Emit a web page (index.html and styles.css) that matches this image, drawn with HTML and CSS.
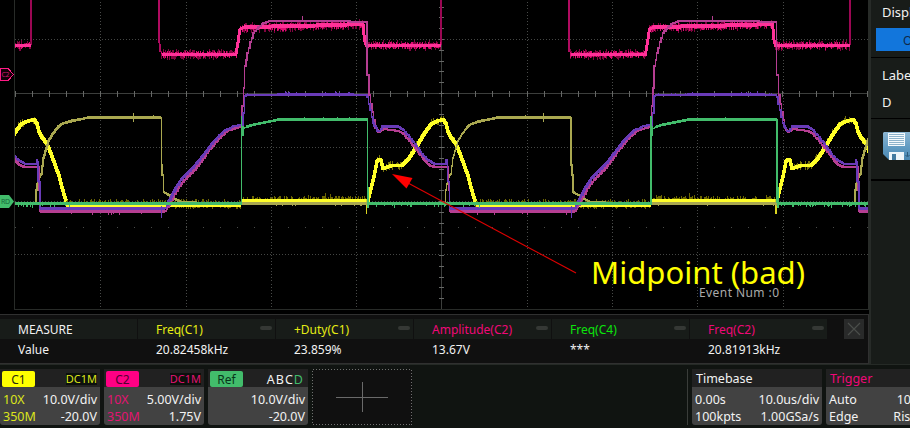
FILE: index.html
```html
<!DOCTYPE html>
<html lang="en">
<head>
<meta charset="utf-8">
<title>Oscilloscope</title>
<link rel="stylesheet" href="styles.css">
</head>
<body>
<div class="scope">
  <div class="upper">
    <main class="main">
      <svg class="plot" width="869" height="314" viewBox="0 0 869 314">
        <defs><clipPath id="area"><rect x="15" y="0" width="853" height="309"/></clipPath></defs>
        <g id="grid" shape-rendering="crispEdges"></g>
        <path d="M14.5 0V309.5H868.5V0" fill="none" stroke="#282b28" shape-rendering="crispEdges"/>
        <g id="waves" clip-path="url(#area)" fill="none" shape-rendering="crispEdges"></g>
        <path d="M.5 68.5H8L13.5 74.5L8 80.5H.5Z" fill="#120008" stroke="#ff1a85" shape-rendering="crispEdges"/>
        <text class="tag tag-c2" x="1.5" y="77" textLength="8">C2</text>
        <path d="M0 195H9L14 201.5L9 208H0Z" fill="#42bc6b"/>
        <text class="tag tag-rd" x="1" y="204" textLength="9">RD</text>
        <path d="M408 183L576 273" stroke="#e00000" stroke-width="1.1"/>
        <path d="M392 174L412.5 178L406.5 188.5Z" fill="#f00"/>
        <text class="event" x="699" y="297" textLength="80">Event Num :0</text>
        <text class="note" x="591" y="284" textLength="214" lengthAdjust="spacingAndGlyphs">Midpoint (bad)</text>
      </svg>
      <section class="measure">
        <div class="cell head"><b>MEASURE</b><span>Value</span></div>
        <div class="cell yellow"><b>Freq(C1)<i></i></b><span>20.82458kHz</span></div>
        <div class="cell yellow"><b>+Duty(C1)<i></i></b><span>23.859%</span></div>
        <div class="cell pink"><b>Amplitude(C2)<i></i></b><span>13.67V</span></div>
        <div class="cell lime"><b>Freq(C4)<i></i></b><span>***</span></div>
        <div class="cell pink"><b>Freq(C2)<i></i></b><span>20.81913kHz</span></div>
        <svg class="close" width="20" height="20"><path d="M4 4L16 16M16 4L4 16" stroke="#4a4d4a" stroke-width="1.2"/></svg>
      </section>
    </main>
    <aside class="side">
      <div class="side-a"><span>Display</span><button>ON</button></div>
      <div class="side-b"><span>Label</span><span class="val">D</span></div>
      <div class="side-c">
        <svg width="29" height="29" viewBox="0 0 29 29">
          <defs><linearGradient id="disk" x2="0" y2="1"><stop stop-color="#8cb6d2"/><stop offset=".55" stop-color="#619bc2"/><stop offset="1" stop-color="#4a87b1"/></linearGradient></defs>
          <path d="M1 0H29V28H6L0 22V1Z" fill="url(#disk)"/>
          <path d="M5 1H22V14H5Z" fill="#f4f9fc"/>
          <path d="M6 2.5H21M6 4.5H21M6 6.5H21M6 8.5H21M6 10.5H21M6 12.5H21" stroke="#8db3cb" shape-rendering="crispEdges"/>
          <path d="M6 20H21V28H6Z" fill="#eef6fa"/><path d="M9 22H13V28H9Z" fill="#437ba0"/>
          <path d="M24.500 20V24M22.500 23L24.500 25L26.500 23" fill="none" stroke="#2c5b7b"/>
        </svg>
      </div>
      <div class="side-d"></div>
    </aside>
  </div>
  <footer class="bar">
    <div class="card c1"><div class="top"><span class="chip">C1</span><span class="mode">DC1M</span></div><div class="row"><em>10X</em><span>10.0V/div</span></div><div class="row"><em>350M</em><span>-20.0V</span></div></div>
    <div class="card c2"><div class="top"><span class="chip">C2</span><span class="mode">DC1M</span></div><div class="row"><em>10X</em><span>5.00V/div</span></div><div class="row"><em>350M</em><span>1.75V</span></div></div>
    <div class="card ref"><div class="top"><span class="chip">Ref</span><span class="abcd">ABC<u>D</u></span></div><div class="row"><em></em><span>10.0V/div</span></div><div class="row"><em></em><span>-20.0V</span></div></div>
    <svg class="add" width="100" height="56" shape-rendering="crispEdges"><rect x=".5" y=".5" width="99" height="55" fill="#101010" stroke="#707070" stroke-dasharray="1 2"/><path d="M24 28.500H76M50.500 13V43" stroke="#6a6a6a"/></svg>
    <div class="divider"></div>
    <div class="card time"><div class="top">Timebase</div><div class="row"><span>0.00s</span><span>10.0us/div</span></div><div class="row"><span>100kpts</span><span>1.00GSa/s</span></div></div>
    <div class="card trig"><div class="top"><span>Trigger</span><span class="mode">C1</span></div><div class="row"><span>Auto</span><span>10.0V</span></div><div class="row"><span>Edge</span><span>Rising</span></div></div>
  </footer>
</div>
<script src="scope.js"></script>
</body>
</html>
```
FILE: styles.css
```css
* { box-sizing: border-box; }
body { margin: 0; background: #000; font: 12px/16px "Noto Sans", "Open Sans", sans-serif; color: #f2f2f2; overflow: hidden; }
.scope { width: 910px; height: 428px; overflow: hidden; display: flex; flex-direction: column; }
.upper { display: flex; height: 364px; }
.main { width: 869px; flex: none; }
.plot { display: block; background: #000; }
.tag { font: 7px "Noto Sans", sans-serif; }
.tag-c2 { fill: #d01870; }
.tag-rd { fill: #17673a; }
.note { font: 31px "Noto Sans", sans-serif; fill: #ff0; }
.event { font: 12px "Noto Sans", sans-serif; fill: #aaa; }
.measure { display: flex; height: 50px; background: #101010; border-top: 1px solid #303030; border-bottom: 1px solid #303030; border-right: 1px solid #303030; padding-top: 4px; }
.cell { width: 137px; margin-right: 1px; flex: none; }
.head { width: 137px; }
.cell b, .cell > span { display: flex; height: 20px; line-height: 21px; padding-left: 18px; font-weight: normal; }
.cell b { background: #181c19; justify-content: space-between; }
.cell > span { line-height: 21px; }
.cell i { width: 12px; height: 4px; border-radius: 2px; background: #353835; margin: 7px 3px 0 0; }
.yellow b { color: #e6ec14; }
.pink b { color: #f00878; }
.lime b { color: #0ce40c; }
.close { background: #292a2a; margin-left: 16px; }
.side { width: 41px; flex: none; background: #181c19; border-left: 2px solid #272b28; overflow: hidden; }
.side > div { border-bottom: 1px solid #000; padding-left: 11px; font-size: 13px; white-space: nowrap; }
.side-a { height: 58px; padding-top: 4px; }
.side-a button { display: block; border: 0; margin: 8px 0 0 -6px; width: 90px; height: 23px; background: #1276dc; color: #102848; font: 12px "Noto Sans", sans-serif; padding: 2px 0 0 27px; text-align: left; }
.side-b { height: 61px; padding-top: 9px; }
.side-b span { display: block; }
.side-b .val { margin-top: 11px; }
.side-c { height: 61px; padding-top: 13px; }
.side-c svg { display: block; margin-left: 1px; }
.bar { display: flex; height: 64px; background: #101411; border-top: 1px solid #252a26; padding-top: 4px; }
.card { width: 100px; height: 56px; flex: none; margin-right: 4px; background: #424242; border-radius: 0 0 3px 3px; }
.top { display: flex; justify-content: space-between; align-items: center; height: 18px; padding: 0 3px 0 2px; background: #212121; }
.chip { width: 33px; height: 16px; margin-top: 2px; border-radius: 2px; text-align: center; line-height: 17px; color: #292910; }
.c1 .chip { background: #ff0; }
.c2 .chip { background: #ff0084; color: #500030; }
.ref .chip { background: #42bc6b; color: #08351a; }
.mode { font-size: 11px; line-height: 12px; background: #0c100d; margin-top: 2px; }
.c1 .mode, .c1 em { color: #dce51b; }
.c2 .mode, .c2 em { color: #e31373; }
.abcd { font-size: 12.5px; letter-spacing: 1px; margin: 3px 1px 0 0; }
.abcd u { color: #42bc6b; text-decoration: none; }
.row { display: flex; justify-content: space-between; height: 17px; line-height: 17px; padding: 0 3px; font-size: 12.5px; }
.top + .row { margin-top: 4px; }
.row em { font-style: normal; }
.add { flex: none; }
.divider { width: 1px; height: 56px; background: #3a3d3a; margin-left: 275px; margin-right: 4px; flex: none; }
.time { width: 130px; }
.time .top, .trig .top { padding-left: 4px; padding-top: 2px; font-size: 12.5px; }
.trig .top { color: #f00878; }
.trig { width: 106px; }
```
FILE: scope.js
```js
const NS = 'http://www.w3.org/2000/svg';
const grid = document.getElementById('grid');
const waves = document.getElementById('waves');
const PERIOD = 409.5;
let seed = 41;
const rnd = () => (seed = (seed * 16807) % 2147483647) / 2147483647;

function path(parent, d, stroke, width, dash) {
  const p = document.createElementNS(NS, 'path');
  p.setAttribute('d', d);
  p.setAttribute('stroke', stroke);
  p.setAttribute('stroke-width', width);
  if (dash) p.setAttribute('stroke-dasharray', dash);
  parent.appendChild(p);
}

// graticule
for (const x of [100, 186, 271, 356, 527, 612, 697, 783]) path(grid, `M${x + .5} 2V307`, '#484a48', 1, '1 2.2');
for (const y of [39, 147, 201, 254]) path(grid, `M15 ${y + .5}H868`, '#444644', 1, '1 2');
path(grid, 'M15 93.5H868M441.5 0V309', '#3c3e3c', 1);
let ticks = '', dots = '';
for (let x = 15.5; x < 868; x += 17.05) { ticks += `M${Math.floor(x) + .5} 91V97`; dots += `M${Math.floor(x)} 227.5h1`; }
for (let y = 7; y < 310; y += 10.8) ticks += `M439 ${Math.floor(y) + .5}H444`;
path(grid, ticks, '#666866', 1);
path(grid, dots, '#484a48', 1);

const line = pts => 'M' + pts.map(p => p.join(' ')).join('L');
const shift = (pts, k) => pts.map(([x, y]) => [x + k * PERIOD, y]);
const all = (pts, color, width) => { for (const k of [-1, 0, 1, 2]) path(waves, line(shift(pts, k)), color, width); };

function stepped(pts, size) {
  const out = [];
  for (let i = 0; i < pts.length - 1; i++) {
    const [x0, y0] = pts[i], [x1, y1] = pts[i + 1];
    const n = Math.max(1, Math.round((x1 - x0) / size));
    for (let j = 0; j < n; j++) {
      const x = x0 + (x1 - x0) * j / n;
      const y = Math.round(y0 + (y1 - y0) * j / n);
      if (out.length) out.push([x, out[out.length - 1][1]]);
      out.push([x, y]);
    }
  }
  out.push(pts[pts.length - 1]);
  return out;
}

function noise(pts, color, up, down, density) {
  for (const k of [-1, 0, 1, 2]) {
    let d = '';
    for (let i = 0; i < pts.length - 1; i++) {
      const [x0, y0] = pts[i], [x1, y1] = pts[i + 1];
      if (Math.abs(y1 - y0) > 3 * Math.abs(x1 - x0)) continue;
      for (let x = x0; x < x1; x++) {
        if (rnd() > density) continue;
        const y = y0 + (y1 - y0) * (x - x0) / (x1 - x0);
        d += `M${Math.floor(x + k * PERIOD) + .5} ${(y - rnd() * up).toFixed(1)}V${(y + rnd() * down).toFixed(1)}`;
      }
    }
    path(waves, d, color, 1);
  }
}

// channel 1
const y1 = [[33, 119], [36, 123], [38, 131], [41, 137], [46, 143], [50, 153], [54, 164], [58, 175], [61, 187], [65, 200], [67, 205]];
const y2 = [[66, 205.5], [241, 205.5]];
const y3 = [[241, 200.5], [366, 200.5]];
const y4 = [[367, 200], [370, 188], [373, 176], [376, 161], [378, 158.5], [380, 160], [382, 168], [385, 167], [389, 165.5], [401, 165], [408, 158], [413, 150], [418, 142], [424, 132], [430, 124], [435, 121], [442.500, 119]];
for (const t of [y1, y4]) { noise(t, '#77720a', 5, 5, .6); all(stepped(t, 1), '#ffff28', 3); }
noise(y2, '#6b6500', 7, 3.5, .95);
all(y2, '#ffff28', 3);
noise(y3, '#6b6500', 5, 4, .95);
noise(y3, '#6b6500', 8, 0, .12);
all(y3, '#ffff28', 3);
all([[366.5, 199], [366.5, 214]], '#d9d422', 1.5);

// reference traces
const gold = [[35.5, 203], [36, 190], [38, 178], [41, 174], [43, 158], [46, 148], [48, 141], [52, 134], [56, 129], [61, 124], [70, 121.5], [82, 119], [87, 117.5], [161, 117.5], [161.5, 165], [162.5, 175], [163.5, 192], [169, 195], [174, 199], [181, 202], [241, 204]];
all(stepped(gold, 1), '#aaa850', 1.4);
all([[57, 127], [62, 124], [70, 121], [82, 119], [88, 117.5], [161, 117.5]], '#aaa850', 2.5);
all([[133.5, 113], [133.5, 122]], '#aaa850', 1);
all([[162, 166], [162, 176]], '#aaa850', 2);
all([[241, 203.5], [380, 203.5]], '#aaa850', 3);
noise([[241, 203.5], [380, 203.5]], '#aaa850', 2, 3, .15);
noise([[88, 117], [161, 117]], '#aaa850', 2, 2, .15);

const purple = [[35, 164], [36.5, 160], [37.5, 162], [38, 181], [39, 182], [40, 208], [165, 208], [168, 202], [172, 195], [176, 187], [182, 178], [188, 172], [194, 166], [200, 159], [207, 150], [213, 142], [219, 135], [225, 130], [230, 128], [233, 126], [241, 125], [243, 113], [244.5, 96], [246, 94.5], [366, 94.5], [367, 97], [370, 110], [373, 123], [377, 131], [379, 131], [382, 126], [398, 127], [403, 130], [409, 137], [416, 146], [423, 156], [429, 161], [434, 164], [444.5, 164]];
const magenta = [[35, 167], [37, 167], [39, 190], [40, 211], [165, 211], [169, 205], [173, 197], [178, 188], [184, 180], [190, 174], [196, 168], [202, 160], [208, 151], [214, 144], [221, 136], [227, 131], [232, 129], [240, 127], [242, 106], [243.5, 88], [244.500, 66], [247, 53], [250, 42], [253, 33], [258, 27], [263, 23], [270, 21], [345, 21], [353, 22], [366, 22], [367, 75], [369, 95], [372, 112], [375, 128], [378, 132], [380, 131], [383, 129], [398, 131], [403, 134], [409, 141], [416, 150], [423, 159], [429, 165], [434, 167], [444.5, 167]];

// channel 2
const c2b = [[161.5, 54], [236, 54], [238, 42], [240, 29], [244, 27.5], [300, 26], [363, 24], [364.5, 40], [366, 45], [369, 45], [440.8, 45]];
all([[31, 45], [31, -5]], '#9b0753', 2);
all([[159, -5], [159, 34], [160, 52]], '#b00b60', 2);
const noisy = [[161, 54], [236, 54], [236.5, 53], [240, 27.5], [300, 26], [363, 24], [366, 45], [440.5, 45]];
noise(noisy, '#80043f', 5, 6, .9);
noise(noisy, '#e00c74', 3.5, 4.5, .75);
all(c2b, '#ff3198', 3);
all([[238, 45], [240, 29]], '#ff3198', 2.5);
all([[244, 27], [300, 26], [363, 24]], '#ff3198', 4);

all(stepped(magenta, 1.5), '#b53e92', 1.5);
all([[40, 211], [165, 211]], '#b53e92', 3);
all([[424, 160], [429, 165], [434, 167], [444, 167]], '#b53e92', 2.5);
all([[169, 205], [178, 188], [190, 174], [202, 160], [214, 144], [227, 131]], '#b53e92', 2);
all([[302.500, 16], [302.500, 22]], '#b53e92', 1);
noise([[55, 211], [165, 211]], '#b53e92', 1, 4, .15);
all(stepped(purple, 1.5), '#693bb8', 1.7);
all([[40, 208], [165, 208]], '#693bb8', 3);
all([[168, 202], [176, 187], [182, 178], [194, 166], [200, 159], [213, 142], [225, 130]], '#693bb8', 2.3);
all([[383, 126.500], [399, 127]], '#693bb8', 3);
all([[277, 94.5], [354, 94.5]], '#693bb8', 3);
noise([[246, 94], [366, 94]], '#693bb8', 3, 1, .12);
all([[161.500, 206], [161.500, 218]], '#693bb8', 1);

const greenLow = [[-42, 203.5], [241, 203.5]];
all(greenLow, '#42bc6b', 3);
noise([[368, 204], [480, 204]], '#42bc6b', 1, 3.5, .4);
const greenHigh = [[241.5, 205], [241.5, 116], [242, 130], [246, 127], [252, 125], [262, 123], [272, 121], [279, 119.5], [367.5, 119.5], [367.5, 203]];
all(greenHigh, '#42bc6b', 1.3);
all(greenHigh.slice(3, 9), '#42bc6b', 2.7);
all([[242.500, 126], [242.500, 136]], '#42bc6b', 2);
all([[368, 187], [368, 208]], '#42bc6b', 2);
noise([[300, 119], [350, 119]], '#42bc6b', 3, 1, .15);
```
